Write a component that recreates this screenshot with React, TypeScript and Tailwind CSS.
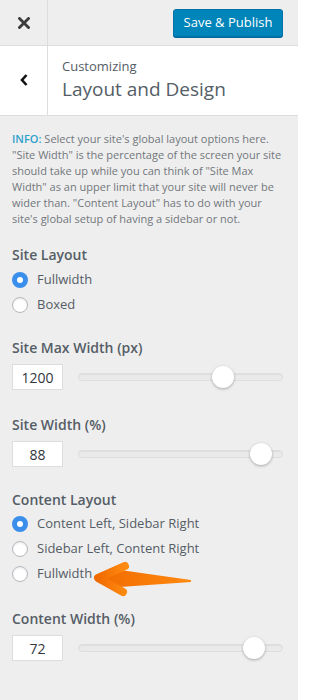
import React from 'react';

const font = { fontFamily: '"Open Sans", "Noto Sans", sans-serif' };

const Radio = ({ label, checked }: { label: string; checked?: boolean }) => (
  <label className="flex items-center h-[25px] text-[13px] text-[#555d66]">
    {checked ? (
      <span className="w-4 h-4 rounded-full bg-[#3b8eea] flex items-center justify-center shrink-0">
        <span className="w-[6px] h-[6px] rounded-full bg-white"></span>
      </span>
    ) : (
      <span className="w-4 h-4 rounded-full bg-white border border-[#b4b9be] shrink-0 shadow-[inset_0_1px_2px_rgba(0,0,0,0.1)]"></span>
    )}
    <span className="ml-[9px]">{label}</span>
  </label>
);

const Slider = ({ value, pct }: { value: string; pct: number }) => (
  <div className="flex items-center mt-[6px]">
    <div className="w-[51px] h-[26px] bg-white border border-[#ddd] flex items-center justify-center text-[14px] text-[#32373c]">
      {value}
    </div>
    <div className="relative ml-[15px] w-[205px] h-[22px] flex items-center">
      <div className="w-full h-[8px] rounded-full bg-[#eaeaea] border border-[#dedede] shadow-[inset_0_1px_1px_rgba(0,0,0,0.06)]"></div>
      <div
        className="absolute top-0 w-[22px] h-[22px] rounded-full bg-white shadow-[0_1px_3px_rgba(0,0,0,0.3)]"
        style={{ left: `${pct * 183}px` }}
      ></div>
    </div>
  </div>
);

const Title = ({ children }: { children: React.ReactNode }) => (
  <h3 className="text-[14px] leading-[20px] font-semibold text-[#555d66]">{children}</h3>
);

export default function App() {
  return (
    <div className="w-[298px] h-[700px] bg-[#eeeeee] relative overflow-hidden" style={font}>
      <div className="h-[46px] flex border-b border-[#dddddd]">
        <div className="w-[48px] border-r border-[#dddddd] flex items-center justify-center">
          <svg width="12" height="12" viewBox="0 0 12 12">
            <path d="M1.5 1.5 L10.5 10.5 M10.5 1.5 L1.5 10.5" stroke="#3c3c3c" strokeWidth="2.8" strokeLinecap="square" />
          </svg>
        </div>
        <div className="flex-1 flex items-center justify-end pr-[15px]">
          <button className="h-[28px] w-[110px] rounded-[3px] bg-[#0085ba] border border-[#0073aa] shadow-[0_1px_0_#006799] text-white text-[13px]">
            Save &amp; Publish
          </button>
        </div>
      </div>
      <div className="h-[70px] flex bg-white border-b border-[#dddddd]">
        <div className="w-[48px] border-r border-[#dddddd] flex justify-center pt-[28px]">
          <svg width="8" height="12" viewBox="0 0 8 12">
            <path d="M6.5 1 L2 6 L6.5 11" stroke="#111" strokeWidth="2.6" fill="none" />
          </svg>
        </div>
        <div className="pl-[14px] pt-[11px]">
          <div className="text-[13px] leading-[18px] text-[#555d66]">Customizing</div>
          <div className="text-[19px] leading-[28px] text-[#555d66]">Layout and Design</div>
        </div>
      </div>
      <div className="px-[12px] pt-[15px]">
        <p className="text-[11px] leading-[16px] text-[#72777c] pr-[2px]">
          <span className="text-[#2ea2cc] font-semibold">INFO:</span> Select your site's global layout options here. "Site Width" is the percentage of the screen your site should take up while you can think of "Site Max Width" as an upper limit that your site will never be wider than. "Content Layout" has to do with your site's global setup of having a sidebar or not.
        </p>
        <div className="mt-[18px]">
          <Title>Site Layout</Title>
          <div className="mt-[2px]">
            <Radio label="Fullwidth" checked />
            <Radio label="Boxed" />
          </div>
        </div>
        <div className="mt-[21px]">
          <Title>Site Max Width (px)</Title>
          <Slider value="1200" pct={0.73} />
        </div>
        <div className="mt-[25px]">
          <Title>Site Width (%)</Title>
          <Slider value="88" pct={0.94} />
        </div>
        <div className="mt-[23px]">
          <Title>Content Layout</Title>
          <div className="mt-[1px]">
            <Radio label="Content Left, Sidebar Right" checked />
            <Radio label="Sidebar Left, Content Right" />
            <Radio label="Fullwidth" />
          </div>
        </div>
        <div className="mt-[23px]">
          <Title>Content Width (%)</Title>
          <Slider value="72" pct={0.9} />
        </div>
      </div>
      <svg className="absolute left-[90px] top-[555px]" width="110" height="50" viewBox="0 0 110 50">
        <defs>
          <linearGradient id="ag" x1="0" y1="0" x2="1" y2="0">
            <stop offset="0" stopColor="#f06a00" />
            <stop offset="1" stopColor="#ff8a10" />
          </linearGradient>
        </defs>
        <path d="M9 21 L30 15 L101 25 L101 27 L30 32 L9 25 Z" fill="url(#ag)" />
        <path d="M35 11 L8 23 L33 37" stroke="url(#ag)" strokeWidth="8" strokeLinecap="round" strokeLinejoin="round" fill="none" />
      </svg>
    </div>
  );
}
